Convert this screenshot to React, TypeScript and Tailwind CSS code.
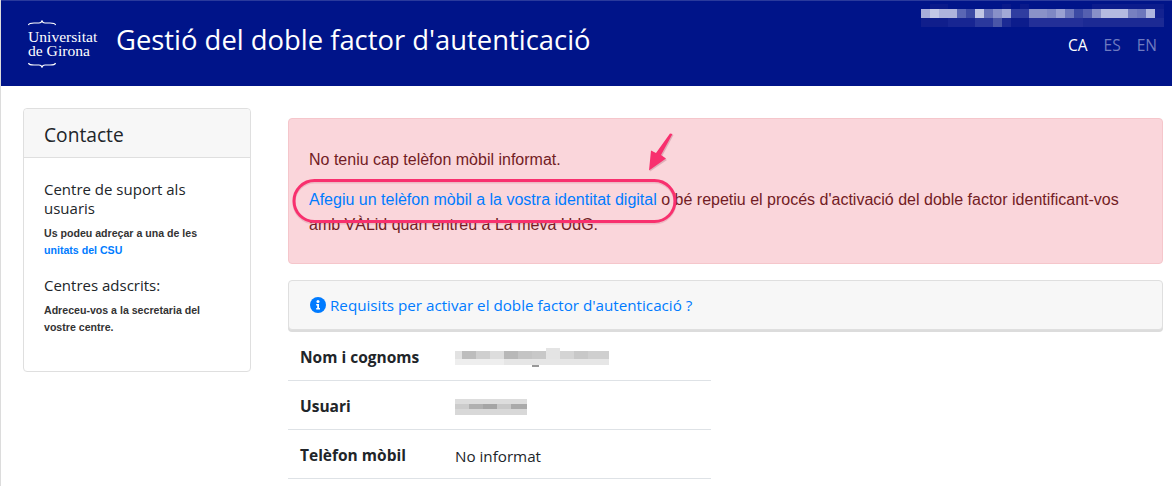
const blurBright = [
  ['#a8aeda', 0, 9], ['#c4c8e6', 9, 9], ['#aeb3dc', 18, 18], ['#5a66b4', 36, 9], ['#3c4aa4', 45, 9],
  ['#c0c5e4', 54, 9], ['#6670b8', 63, 9], ['#8890c8', 72, 9], ['#a2a9d6', 81, 9], ['#2f3da0', 90, 18],
  ['#8a92c8', 108, 18], ['#7f88c4', 126, 9], ['#9aa1d2', 135, 9], ['#6d77bc', 144, 9], ['#3c4aa4', 153, 9],
  ['#5560b0', 162, 9], ['#8890c8', 171, 9], ['#b4bae0', 180, 27], ['#7780c0', 207, 9], ['#6d77bc', 216, 9],
  ['#b0b6de', 225, 9], ['#142290', 234, 9],
] as const

const blurLow = [
  ['#101e8c', 0, 27], ['#172592', 27, 27], ['#2a389c', 54, 18], ['#4a56a8', 72, 9], ['#1c2a94', 81, 9],
  ['#0c1c8c', 90, 18], ['#232f98', 108, 54], ['#1c2a94', 162, 81],
] as const

const blurUpper = [
  ['#0a1a8a', 9, 18], ['#0a1a8a', 81, 9], ['#0a1a8a', 99, 9], ['#0c1c8c', 171, 72],
] as const

const blurName = [
  ['#e2e2e2', 0, 3, 7, 8], ['#bdbdbd', 7, 3, 14, 8], ['#cfcfcf', 21, 3, 14, 8], ['#dddddd', 35, 3, 14, 8],
  ['#b8b8b8', 49, 3, 14, 8], ['#c4c4c4', 63, 3, 14, 8], ['#c8c8c8', 77, 3, 14, 8], ['#e4e4e4', 91, 0, 14, 11],
  ['#d4d4d4', 105, 3, 14, 8], ['#c8c8c8', 119, 3, 14, 8], ['#cfcfcf', 133, 3, 21, 8], ['#eeeeee', 0, 11, 49, 6],
  ['#e6e6e6', 49, 11, 105, 6], ['#999999', 77, 17, 7, 2],
] as const

const blurUser = [
  ['#dddddd', 0, 0, 72, 5], ['#cccccc', 0, 5, 14, 5], ['#b0b0b0', 14, 5, 14, 5], ['#a5a5a5', 28, 5, 14, 5],
  ['#c8c8c8', 42, 5, 14, 5], ['#aaaaaa', 56, 5, 16, 5], ['#d8d8d8', 0, 10, 72, 6],
] as const

function Mosaic({ cells, w, h }: { cells: readonly (readonly [string, number, number, number, number])[]; w: number; h: number }) {
  return (
    <svg width={w} height={h} viewBox={`0 0 ${w} ${h}`} className="block" shapeRendering="crispEdges">
      {cells.map(([fill, x, y, cw, ch], i) => (
        <rect key={i} x={x} y={y} width={cw} height={ch} fill={fill} />
      ))}
    </svg>
  )
}

function Brace({ flip }: { flip?: boolean }) {
  return (
    <svg width="28" height="6" viewBox="0 0 28 6" className={flip ? 'block rotate-180' : 'block'} fill="none" stroke="white" strokeWidth="1.2">
      <path d="M0.5 5C1 3 3 3 6 3H11C12.5 3 13.5 2.4 14 1C14.5 2.4 15.5 3 17 3H22C25 3 27 3 27.5 5" />
    </svg>
  )
}

function Row({ label, children }: { label: string; children: React.ReactNode }) {
  return (
    <div className="flex h-[49px] items-center border-b border-[#dee2e6] pl-[12px] pt-[3px]">
      <span className="w-[155px] text-[15.5px] font-bold text-[#212529]">{label}</span>
      {children}
    </div>
  )
}

export default function App() {
  return (
    <div className="relative h-[486px] w-[1172px] overflow-hidden border-l border-[#dcdcdc] bg-white font-['Open_Sans','Noto_Sans',sans-serif] text-[16px] text-[#212529]">
      {/* Header */}
      <header className="flex h-[86px] items-start justify-between border-t border-[#2a3a9c] bg-[#001489] text-white">
        <div className="flex items-start pt-[19px] pl-[27px]">
          <div className="flex w-[88px] flex-col gap-[4px]">
            <Brace />
            <div className="whitespace-nowrap font-['Liberation_Serif',serif] text-[15.6px] leading-[14px]">
              Universitat<br />de Girona
            </div>
            <Brace flip />
          </div>
          <h1 className="text-[27.4px] leading-[40px]">Gestió del doble factor d'autenticació</h1>
        </div>
        <div className="flex flex-col items-end pr-[8px] pt-[3px]">
          <svg width="243" height="23" viewBox="0 0 243 23" className="block" shapeRendering="crispEdges">
            {blurUpper.map(([fill, x, w], i) => <rect key={i} x={x} y={0} width={w} height={5} fill={fill} />)}
            {blurBright.map(([fill, x, w], i) => <rect key={i} x={x} y={5} width={w} height={9} fill={fill} />)}
            {blurLow.map(([fill, x, w], i) => <rect key={i} x={x} y={14} width={w} height={9} fill={fill} />)}
          </svg>
          <div className="mt-[7px] flex gap-[16px] pr-[7px] text-[15.5px] leading-[22px]">
            <span>CA</span>
            <span className="text-[#6f7bc0]">ES</span>
            <span className="text-[#6f7bc0]">EN</span>
          </div>
        </div>
      </header>

      <div className="flex items-start pt-[22px] pl-[22px]">
        {/* Sidebar */}
        <aside className="h-[264px] w-[228px] shrink-0 rounded-[4px] border border-[#dfdfdf]">
          <div className="h-[49px] rounded-t-[4px] border-b border-[#dfdfdf] bg-[#f7f7f7] pl-[20px] text-[19.2px] leading-[52px]">Contacte</div>
          <div className="pl-[20px] pt-[22px] pr-[20px]">
            <h2 className="text-[15px] leading-[19px]">Centre de suport als usuaris</h2>
            <p className="mt-[7px] font-['Liberation_Sans',sans-serif] text-[10.6px] font-bold leading-[17px] text-[#333333]">
              Us podeu adreçar a una de les <span className="text-[#007bff]">unitats del CSU</span>
            </p>
            <h2 className="mt-[17px] text-[15px] leading-[19px]">Centres adscrits:</h2>
            <p className="mt-[7px] font-['Liberation_Sans',sans-serif] text-[10.6px] font-bold leading-[17px] text-[#333333]">
              Adreceu-vos a la secretaria del vostre centre.
            </p>
          </div>
        </aside>

        {/* Main */}
        <main className="ml-[37px] w-[875px] shrink-0 pt-[10px]">
          <div className="h-[146px] rounded-[4px] border border-[#f5c6cb] bg-[#fad6db] px-[20px] pt-[29px] font-['Liberation_Sans',sans-serif] text-[#721c24]">
            <p className="leading-[24px]">No teniu cap telèfon mòbil informat.</p>
            <p className="mt-[15px] w-[830px] leading-[25px]">
              <span className="text-[#007bff]">Afegiu un telèfon mòbil a la vostra identitat digital</span> o bé repetiu el procés d'activació del doble factor identificant-vos amb VÀLid quan entreu a La meva UdG.
            </p>
          </div>
          <div className="mt-[16px] flex h-[50px] items-center gap-[4px] rounded-[4px] border border-[#dfdfdf] bg-[#f7f7f7] pl-[21px] text-[15.2px] text-[#007bff] shadow-[0_2px_0_#dcdcdc]">
            <svg width="16" height="16" viewBox="0 0 16 16" aria-hidden="true">
              <circle cx="8" cy="8" r="8" fill="#007bff" />
              <circle cx="8" cy="4.4" r="1.5" fill="white" />
              <path d="M6.2 7H9V11H10V12.4H6.2V11H7.2V8.4H6.2Z" fill="white" />
            </svg>
            <span>Requisits per activar el doble factor d'autenticació ?</span>
          </div>
          <div className="mt-[2px] w-[423px]">
            <Row label="Nom i cognoms"><Mosaic cells={blurName} w={154} h={19} /></Row>
            <Row label="Usuari"><Mosaic cells={blurUser} w={72} h={16} /></Row>
            <Row label="Telèfon mòbil"><span className="text-[15.2px] leading-[22px]">No informat</span></Row>
          </div>
        </main>
      </div>

      {/* Annotation drawn on top of the screenshot */}
      <svg className="absolute left-[-1px] top-0" width="1172" height="486" fill="none" aria-hidden="true">
        <rect x="294" y="182" width="381" height="41" rx="20.5" stroke="#b03a5a" strokeOpacity="0.18" strokeWidth="3" />
        <rect x="294" y="180.5" width="381" height="41" rx="20.5" stroke="#f8306e" strokeWidth="3" />
        <path d="M673.5 135L662 156.5L667 160L650 171.5L652 151.5L657 154.5L671 134.5Z" fill="#8a3a50" fillOpacity="0.25" />
        <path d="M672.5 134L661 155L666 158.5L649 170.5L651 150.5L656 153L670 133.5Z" fill="#f8306e" />
      </svg>
    </div>
  )
}
